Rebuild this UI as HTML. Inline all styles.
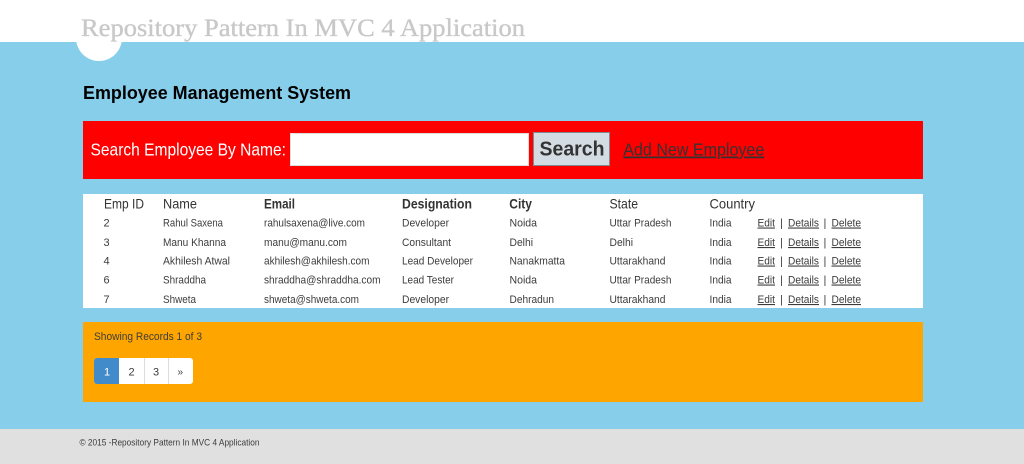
<!DOCTYPE html>
<html lang="en">
<head>
<meta charset="utf-8">
<title>Repository Pattern In MVC 4 Application</title>
<style>
html,body{margin:0;padding:0;width:1024px;height:464px;overflow:hidden;background:#87ceeb}
.b{position:absolute}
svg{position:absolute;left:0;top:0}
text{font-family:"Liberation Sans",sans-serif;fill:#3c3c3c;font-size:11px}
.h{font-size:14px;fill:#333}
.bd{font-weight:bold}
.u{text-decoration:underline}
</style>
</head>
<body>
<div class="b" style="left:0;top:0;width:1024px;height:41.5px;background:#fff"></div>
<div class="b" style="left:76px;top:15px;width:46px;height:46px;border-radius:50%;background:#fff"></div>
<div class="b" style="left:83px;top:120.5px;width:840px;height:58px;background:#f00"></div>
<div class="b" style="left:290px;top:133px;width:239px;height:32.5px;box-sizing:border-box;background:#fff;border:1px solid #ddd"></div>
<div class="b" style="left:533px;top:131.5px;width:77px;height:34.5px;box-sizing:border-box;background:#d3dce3;border:1px solid #7d8a90"></div>
<div class="b" style="left:83px;top:194px;width:840px;height:114px;background:#fff"></div>
<div class="b" style="left:83px;top:321.5px;width:840px;height:80.5px;background:#ffa500"></div>
<div class="b" style="left:94px;top:358px;width:99px;height:25.5px;background:#fff;border-radius:3px"></div>
<div class="b" style="left:94px;top:358px;width:25px;height:25.5px;background:#428bca;border-radius:3px 0 0 3px"></div>
<div class="b" style="left:143.5px;top:358px;width:1px;height:25.5px;background:#ddd"></div>
<div class="b" style="left:168px;top:358px;width:1px;height:25.5px;background:#ddd"></div>
<div class="b" style="left:0;top:428.5px;width:1024px;height:35.5px;background:#e0e0e0"></div>
<svg width="1024" height="464" viewBox="0 0 1024 464" xmlns="http://www.w3.org/2000/svg">
<text x="81" y="36" textLength="444" lengthAdjust="spacingAndGlyphs" style="font-family:'Liberation Serif',serif;font-size:25px;fill:#c8c8c8;stroke:#c8c8c8;stroke-width:.35px">Repository Pattern In MVC 4 Application</text>
<text x="83" y="99" textLength="268" lengthAdjust="spacingAndGlyphs" class="bd" style="font-size:18px;fill:#000">Employee Management System</text>
<text x="90.5" y="155.5" textLength="195.5" lengthAdjust="spacingAndGlyphs" style="font-size:17.5px;fill:#fff">Search Employee By Name:</text>
<text x="539.5" y="155.5" textLength="65" lengthAdjust="spacingAndGlyphs" class="bd" style="font-size:20px;fill:#333">Search</text>
<text x="623.3" y="155.5" textLength="141" lengthAdjust="spacingAndGlyphs" class="u" style="font-size:17.5px;fill:#333">Add New Employee</text>

<text x="104" y="208.5" textLength="40" lengthAdjust="spacingAndGlyphs" class="h">Emp ID</text>
<text x="163" y="208.5" textLength="34" lengthAdjust="spacingAndGlyphs" class="h">Name</text>
<text x="264" y="208.5" textLength="31" lengthAdjust="spacingAndGlyphs" class="h bd">Email</text>
<text x="402" y="208.5" textLength="70" lengthAdjust="spacingAndGlyphs" class="h bd">Designation</text>
<text x="509.3" y="208.5" textLength="22.7" lengthAdjust="spacingAndGlyphs" class="h bd">City</text>
<text x="609.5" y="208.5" textLength="28.5" lengthAdjust="spacingAndGlyphs" class="h">State</text>
<text x="709.5" y="208.5" textLength="45.5" lengthAdjust="spacingAndGlyphs" class="h">Country</text>

<text x="103.5" y="226.5">2</text>
<text x="163" y="226.5" textLength="60" lengthAdjust="spacingAndGlyphs">Rahul Saxena</text>
<text x="264" y="226.5" textLength="101" lengthAdjust="spacingAndGlyphs">rahulsaxena@live.com</text>
<text x="402" y="226.5" textLength="47" lengthAdjust="spacingAndGlyphs">Developer</text>
<text x="509.5" y="226.5" textLength="27.5" lengthAdjust="spacingAndGlyphs">Noida</text>
<text x="609.5" y="226.5" textLength="62" lengthAdjust="spacingAndGlyphs">Uttar Pradesh</text>

<text x="103.5" y="246">3</text>
<text x="163" y="246" textLength="63" lengthAdjust="spacingAndGlyphs">Manu Khanna</text>
<text x="264" y="246" textLength="83" lengthAdjust="spacingAndGlyphs">manu@manu.com</text>
<text x="402" y="246" textLength="49" lengthAdjust="spacingAndGlyphs">Consultant</text>
<text x="509.5" y="246" textLength="23.5" lengthAdjust="spacingAndGlyphs">Delhi</text>
<text x="609.5" y="246" textLength="23.5" lengthAdjust="spacingAndGlyphs">Delhi</text>

<text x="103.5" y="264.5">4</text>
<text x="163" y="264.5" textLength="67" lengthAdjust="spacingAndGlyphs">Akhilesh Atwal</text>
<text x="264" y="264.5" textLength="105.5" lengthAdjust="spacingAndGlyphs">akhilesh@akhilesh.com</text>
<text x="402" y="264.5" textLength="71" lengthAdjust="spacingAndGlyphs">Lead Developer</text>
<text x="509.5" y="264.5" textLength="55.5" lengthAdjust="spacingAndGlyphs">Nanakmatta</text>
<text x="609.5" y="264.5" textLength="56" lengthAdjust="spacingAndGlyphs">Uttarakhand</text>

<text x="103.5" y="283.5">6</text>
<text x="163" y="283.5" textLength="43" lengthAdjust="spacingAndGlyphs">Shraddha</text>
<text x="264" y="283.5" textLength="116.5" lengthAdjust="spacingAndGlyphs">shraddha@shraddha.com</text>
<text x="402" y="283.5" textLength="52" lengthAdjust="spacingAndGlyphs">Lead Tester</text>
<text x="509.5" y="283.5" textLength="27.5" lengthAdjust="spacingAndGlyphs">Noida</text>
<text x="609.5" y="283.5" textLength="62" lengthAdjust="spacingAndGlyphs">Uttar Pradesh</text>

<text x="103.5" y="303">7</text>
<text x="163" y="303" textLength="33" lengthAdjust="spacingAndGlyphs">Shweta</text>
<text x="264" y="303" textLength="95" lengthAdjust="spacingAndGlyphs">shweta@shweta.com</text>
<text x="402" y="303" textLength="47" lengthAdjust="spacingAndGlyphs">Developer</text>
<text x="509.5" y="303" textLength="44.5" lengthAdjust="spacingAndGlyphs">Dehradun</text>
<text x="609.5" y="303" textLength="56" lengthAdjust="spacingAndGlyphs">Uttarakhand</text>

<g>
<text x="709.5" y="226.5" textLength="22" lengthAdjust="spacingAndGlyphs">India</text>
<text x="709.5" y="246" textLength="22" lengthAdjust="spacingAndGlyphs">India</text>
<text x="709.5" y="264.5" textLength="22" lengthAdjust="spacingAndGlyphs">India</text>
<text x="709.5" y="283.5" textLength="22" lengthAdjust="spacingAndGlyphs">India</text>
<text x="709.5" y="303" textLength="22" lengthAdjust="spacingAndGlyphs">India</text>
</g>

<g>
<text x="757.5" y="226.5" textLength="17.5" lengthAdjust="spacingAndGlyphs" class="u">Edit</text><text x="780" y="226.5">|</text><text x="788" y="226.5" textLength="31" lengthAdjust="spacingAndGlyphs" class="u">Details</text><text x="823.5" y="226.5">|</text><text x="831.5" y="226.5" textLength="29.5" lengthAdjust="spacingAndGlyphs" class="u">Delete</text>
<text x="757.5" y="246" textLength="17.5" lengthAdjust="spacingAndGlyphs" class="u">Edit</text><text x="780" y="246">|</text><text x="788" y="246" textLength="31" lengthAdjust="spacingAndGlyphs" class="u">Details</text><text x="823.5" y="246">|</text><text x="831.5" y="246" textLength="29.5" lengthAdjust="spacingAndGlyphs" class="u">Delete</text>
<text x="757.5" y="264.5" textLength="17.5" lengthAdjust="spacingAndGlyphs" class="u">Edit</text><text x="780" y="264.5">|</text><text x="788" y="264.5" textLength="31" lengthAdjust="spacingAndGlyphs" class="u">Details</text><text x="823.5" y="264.5">|</text><text x="831.5" y="264.5" textLength="29.5" lengthAdjust="spacingAndGlyphs" class="u">Delete</text>
<text x="757.5" y="283.5" textLength="17.5" lengthAdjust="spacingAndGlyphs" class="u">Edit</text><text x="780" y="283.5">|</text><text x="788" y="283.5" textLength="31" lengthAdjust="spacingAndGlyphs" class="u">Details</text><text x="823.5" y="283.5">|</text><text x="831.5" y="283.5" textLength="29.5" lengthAdjust="spacingAndGlyphs" class="u">Delete</text>
<text x="757.5" y="303" textLength="17.5" lengthAdjust="spacingAndGlyphs" class="u">Edit</text><text x="780" y="303">|</text><text x="788" y="303" textLength="31" lengthAdjust="spacingAndGlyphs" class="u">Details</text><text x="823.5" y="303">|</text><text x="831.5" y="303" textLength="29.5" lengthAdjust="spacingAndGlyphs" class="u">Delete</text>
</g>

<text x="94" y="340" textLength="108" lengthAdjust="spacingAndGlyphs">Showing Records 1 of 3</text>
<text x="104" y="375.5" style="font-size:11px;fill:#fff">1</text>
<text x="128.5" y="375.5">2</text>
<text x="153" y="375.5">3</text>
<text x="177.5" y="375" style="font-size:10px">»</text>
<text x="79.5" y="445.5" textLength="180" lengthAdjust="spacingAndGlyphs" style="font-size:9.5px">© 2015 -Repository Pattern In MVC 4 Application</text>
</svg>
</body>
</html>
